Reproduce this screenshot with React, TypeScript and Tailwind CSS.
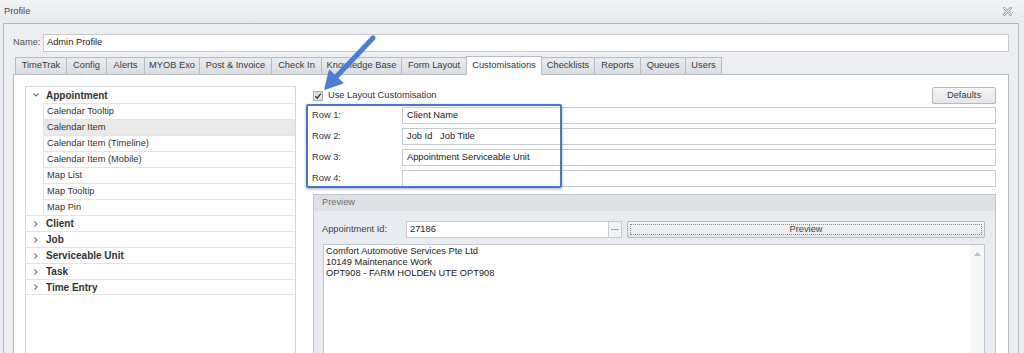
import React from 'react';

const tabs: { label: string; w: string; active?: boolean }[] = [
  { label: 'TimeTrak', w: 'w-[52px]' },
  { label: 'Config', w: 'w-[41px]' },
  { label: 'Alerts', w: 'w-[39px]' },
  { label: 'MYOB Exo', w: 'w-[56px]' },
  { label: 'Post & Invoice', w: 'w-[73px]' },
  { label: 'Check In', w: 'w-[51px]' },
  { label: 'Knowledge Base', w: 'w-[81px]' },
  { label: 'Form Layout', w: 'w-[66px]' },
  { label: 'Customisations', w: 'w-[76px]', active: true },
  { label: 'Checklists', w: 'w-[54px]' },
  { label: 'Reports', w: 'w-[47px]' },
  { label: 'Queues', w: 'w-[46px]' },
  { label: 'Users', w: 'w-[37px]' },
];

const appointmentItems = [
  'Calendar Tooltip',
  'Calendar Item',
  'Calendar Item (Timeline)',
  'Calendar Item (Mobile)',
  'Map List',
  'Map Tooltip',
  'Map Pin',
];

const collapsed = ['Client', 'Job', 'Serviceable Unit', 'Task', 'Time Entry'];

const rows = [
  { label: 'Row 1:', value: 'Client Name' },
  { label: 'Row 2:', value: 'Job Id   Job Title' },
  { label: 'Row 3:', value: 'Appointment Serviceable Unit' },
  { label: 'Row 4:', value: '' },
];

const Chevron: React.FC<{ open?: boolean }> = ({ open }) => (
  <svg width="6" height="6" viewBox="0 0 6 6" className="shrink-0">
    {open ? (
      <path d="M0.5 1.5 L3 4 L5.5 1.5" fill="none" stroke="#7a7a7a" strokeWidth="1.1" />
    ) : (
      <path d="M1.5 0.5 L4 3 L1.5 5.5" fill="none" stroke="#7a7a7a" strokeWidth="1.1" />
    )}
  </svg>
);

// skin close button: hollow X
const CloseGlyph: React.FC = () => (
  <svg width="9" height="9" viewBox="0 0 9 9">
    <path d="M1 1 L8 8 M8 1 L1 8" stroke="#a9aeb4" strokeWidth="2.8" strokeLinecap="square" />
    <path d="M1 1 L8 8 M8 1 L1 8" stroke="#eef0f2" strokeWidth="1" strokeLinecap="square" />
  </svg>
);

export default function App() {
  return (
    <div className="relative w-[1024px] h-[353px] overflow-hidden bg-[#eceef1] font-['Liberation_Sans',Arial,sans-serif] text-[9.3px] text-[#333] flex flex-col">
      {/* title bar */}
      <div className="h-[23px] shrink-0 flex items-center justify-between pl-[4px] pr-[12px] bg-gradient-to-b from-[#f2f3f5] to-[#e7e9ec]">
        <span className="text-[#4a4a4a]">Profile</span>
        <CloseGlyph />
      </div>

      {/* window body */}
      <div className="flex-1 min-h-0 ml-[3px] mr-[5px] border border-b-0 border-[#b4b9c0] px-[9px] pt-[10px] flex flex-col">
        <div className="flex items-center h-[18px]">
          <span className="w-[30px] text-[#555]">Name:</span>
          <div className="flex-1 h-[18px] border border-[#c6cbd2] bg-white flex items-center pl-[3px] text-[#222]">
            Admin Profile
          </div>
        </div>

        {/* tabs */}
        <div className="mt-[3px] h-[19px] flex items-end pl-[2px]">
          {tabs.map((t, i) => (
            <div
              key={t.label}
              className={
                t.active
                  ? `${t.w} ${i > 0 ? '-ml-px' : ''} relative z-10 h-[19px] -mb-px border border-b-0 border-[#b7bcc3] bg-white flex items-center justify-center text-[#333]`
                  : `${t.w} ${i > 0 ? '-ml-px' : ''} h-[17px] border border-b-0 border-[#b7bcc3] bg-gradient-to-b from-[#e9ecef] to-[#d9dde2] flex items-center justify-center text-[#3a3a3a]`
              }
            >
              {t.label}
            </div>
          ))}
        </div>

        {/* tab page */}
        <div className="flex-1 min-h-0 border border-b-0 border-[#b7bcc3] bg-white pt-[11px] pl-[11px] flex">
          {/* tree */}
          <div className="w-[271px] shrink-0 border border-b-0 border-[#d3d6da] bg-white">
            <div className="h-[16px] flex items-center pl-[7px] gap-[7px] font-bold text-[10px] text-[#333]">
              <Chevron open />
              <span>Appointment</span>
            </div>
            {appointmentItems.map((item) => (
              <div
                key={item}
                className={`ml-[17px] h-[16px] border-l border-t border-[#e4e4e4] pl-[3px] flex items-center ${
                  item === 'Calendar Item' ? 'bg-[#e9e9e9]' : ''
                }`}
              >
                {item}
              </div>
            ))}
            {collapsed.map((c, i) => (
              <div
                key={c}
                className={`h-[16px] border-t border-[#e4e4e4] flex items-center pl-[7px] gap-[7px] font-bold text-[10px] ${
                  i === collapsed.length - 1 ? 'border-b' : ''
                }`}
              >
                <Chevron />
                <span>{c}</span>
              </div>
            ))}
          </div>

          {/* settings */}
          <div className="flex-1 ml-[16px] mr-[12px] pt-[1px] flex flex-col">
            <div className="h-[17px] flex items-center justify-between">
              <div className="flex items-center gap-[5px] pl-[1px]">
                <svg width="10" height="10" viewBox="0 0 10 10">
                  <rect x="0.5" y="0.5" width="9" height="9" fill="#e2e2e2" stroke="#a9a9a9" />
                  <path d="M2.3 5.2 L4.2 7.2 L7.8 2.6" fill="none" stroke="#333" strokeWidth="1.3" />
                </svg>
                <span>Use Layout Customisation</span>
              </div>
              <div className="w-[64px] h-[17px] border border-[#b5bac1] rounded-[2px] bg-gradient-to-b from-[#f5f6f7] to-[#e2e5e9] flex items-center justify-center text-[#3a3a3a]">
                Defaults
              </div>
            </div>

            <div className="mt-[3px] flex flex-col gap-[4px]">
              {rows.map((r) => (
                <div key={r.label} className="h-[17px] flex items-center">
                  <span className="w-[90px] shrink-0">{r.label}</span>
                  <div className="flex-1 h-[17px] border border-[#c6cbd2] bg-white flex items-center pl-[4px] whitespace-pre text-[#222]">
                    {r.value}
                  </div>
                </div>
              ))}
            </div>

            {/* preview group */}
            <div className="mt-[7px] flex-1 ml-[1px] border border-b-0 border-[#c3c8cf] bg-[#e8ebef] flex flex-col">
              <div className="h-[16px] shrink-0 bg-[#dde1e6] flex items-center pl-[8px] text-[#6a6a6a]">
                Preview
              </div>
              <div className="flex-1 pt-[10px] pl-[8px] pr-[10px] flex flex-col">
                <div className="h-[17px] flex items-center">
                  <span className="w-[84px] shrink-0 text-[#444]">Appointment Id:</span>
                  <div className="w-[202px] h-[17px] border border-r-0 border-[#c6cbd2] bg-white flex items-center pl-[3px] text-[#222]">
                    27186
                  </div>
                  <div className="w-[14px] h-[17px] border border-[#c6cbd2] bg-[#f1f2f4] flex items-center justify-center text-[#555] text-[8px] font-bold leading-none">
                    ···
                  </div>
                  <div className="flex-1 ml-[5px] h-[17px] border border-[#b5bac1] rounded-[2px] bg-gradient-to-b from-[#f5f6f7] to-[#e3e6e9] p-[2px]">
                    <div className="h-full border border-dotted border-[#8a8a8a] flex items-center justify-center text-[#444]">
                      Preview
                    </div>
                  </div>
                </div>
                <div className="mt-[6px] flex-1 ml-[1px] border border-b-0 border-[#c3c8cf] bg-white flex">
                  <div className="flex-1 pl-[2px] pt-[1px] leading-[11px] text-[#222]">
                    <div>Comfort Automotive Services Pte Ltd</div>
                    <div>10149 Maintenance Work</div>
                    <div>OPT908 - FARM HOLDEN UTE OPT908</div>
                  </div>
                  <div className="w-[14px] bg-[#f7f7f7] flex justify-center pt-[7px]">
                    <svg width="7" height="4" viewBox="0 0 7 4">
                      <path d="M0 4 L3.5 0 L7 4 Z" fill="#c2c2c2" />
                    </svg>
                  </div>
                </div>
              </div>
            </div>
          </div>
        </div>
      </div>

      {/* annotation: highlight box */}
      <div className="absolute left-[306px] top-[104px] w-[256px] h-[84px] border-2 border-[#4a78c8] rounded-[2px] shadow-[0_1px_3px_rgba(40,70,130,0.45)]" />

      {/* annotation: arrow */}
      <svg className="absolute left-0 top-0" width="1024" height="353" viewBox="0 0 1024 353">
        <line x1="373" y1="38" x2="337" y2="76" stroke="#4b7fd4" strokeWidth="5" strokeLinecap="round" />
        <path d="M325 89 L342.5 83 L329.5 70.5 Z" fill="#4b7fd4" stroke="#4b7fd4" strokeWidth="1.5" strokeLinejoin="round" />
      </svg>
    </div>
  );
}
